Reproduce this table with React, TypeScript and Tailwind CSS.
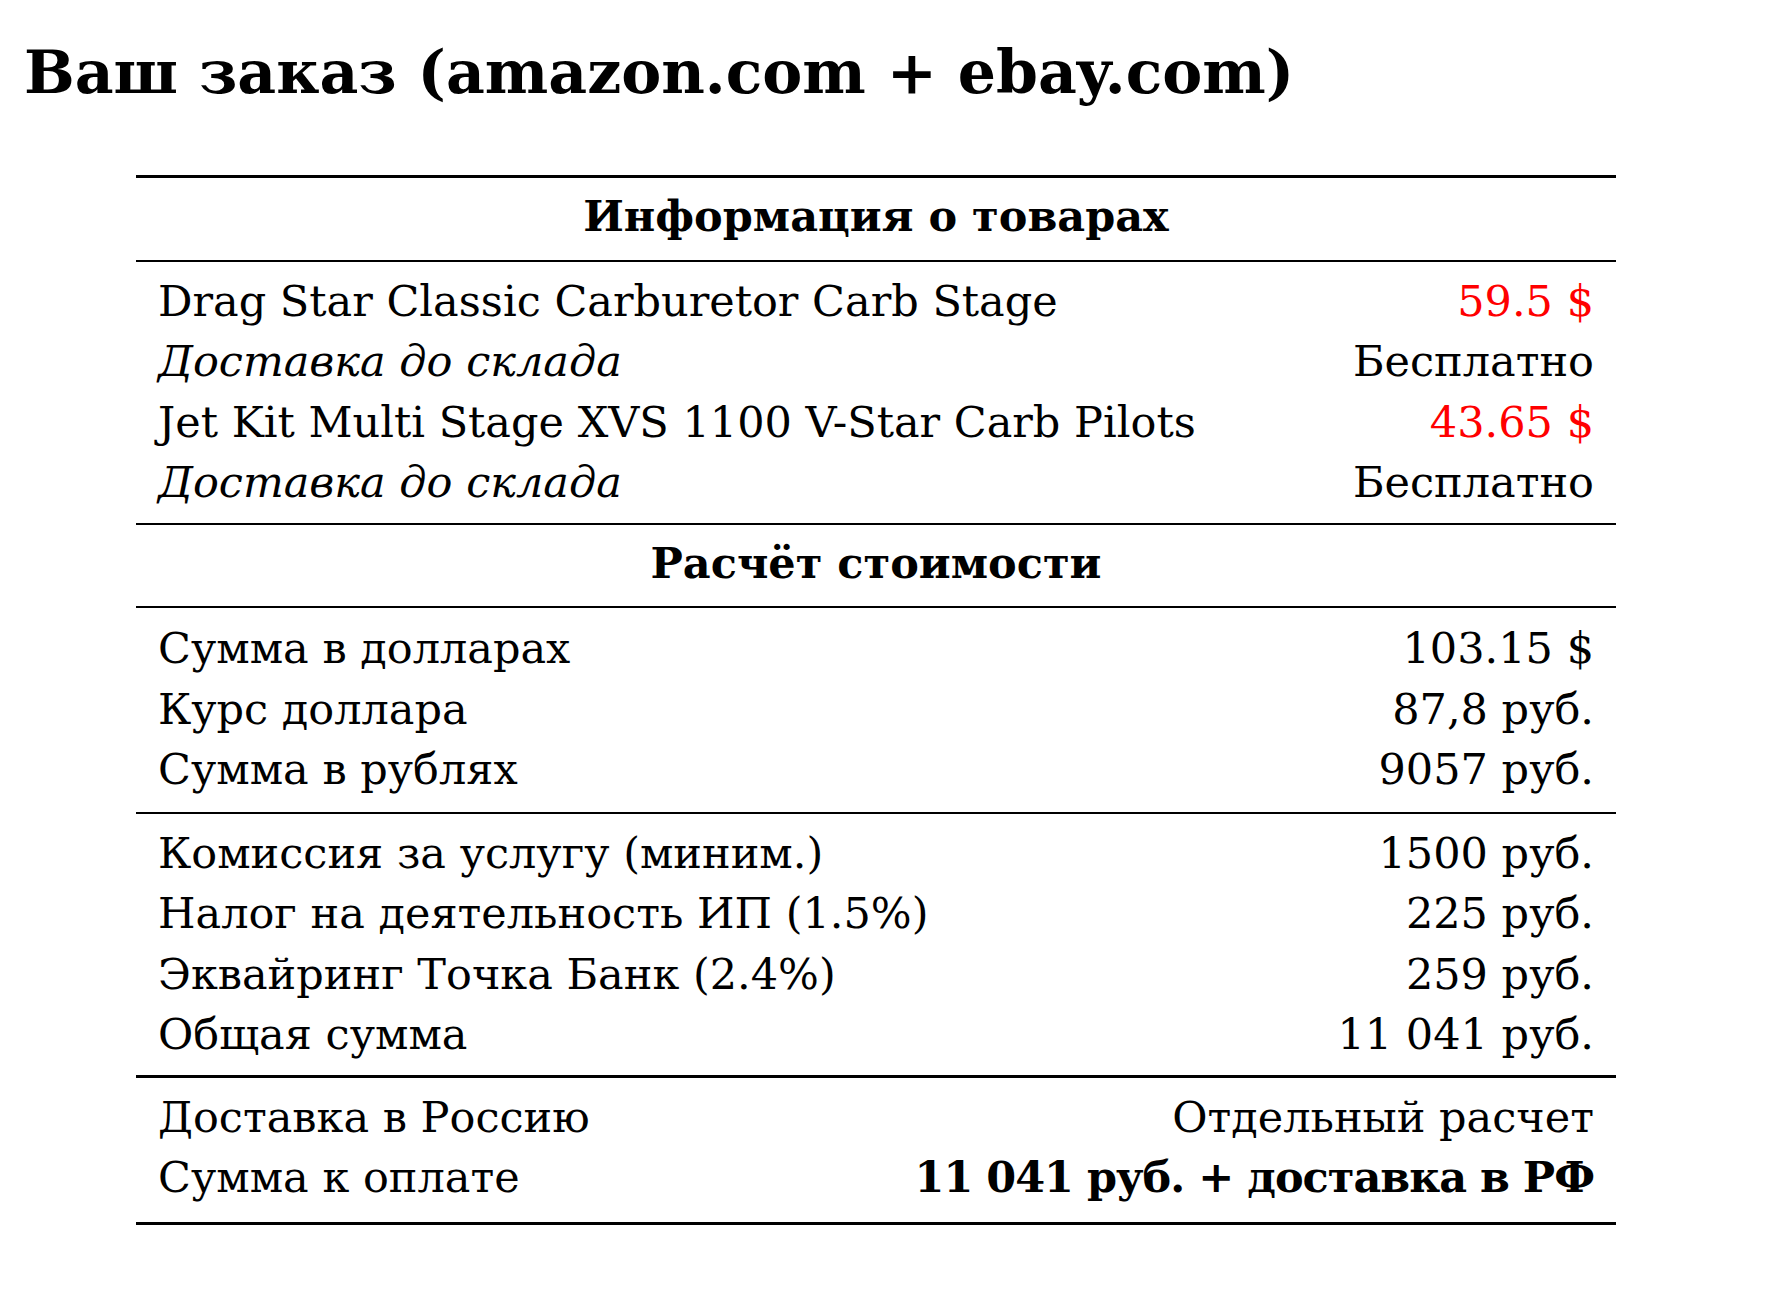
const serif = "font-['DejaVu_Serif','Liberation_Serif',serif]"

type Row = { label: string; value: string; italic?: boolean; red?: boolean; bold?: boolean }

const goods: Row[] = [
  { label: 'Drag Star Classic Carburetor Carb Stage', value: '59.5 $', red: true },
  { label: 'Доставка до склада', value: 'Бесплатно', italic: true },
  { label: 'Jet Kit Multi Stage XVS 1100 V-Star Carb Pilots', value: '43.65 $', red: true },
  { label: 'Доставка до склада', value: 'Бесплатно', italic: true },
]

const base: Row[] = [
  { label: 'Сумма в долларах', value: '103.15 $' },
  { label: 'Курс доллара', value: '87,8 руб.' },
  { label: 'Сумма в рублях', value: '9057 руб.' },
]

const fees: Row[] = [
  { label: 'Комиссия за услугу (миним.)', value: '1500 руб.' },
  { label: 'Налог на деятельность ИП (1.5%)', value: '225 руб.' },
  { label: 'Эквайринг Точка Банк (2.4%)', value: '259 руб.' },
  { label: 'Общая сумма', value: '11 041 руб.' },
]

const total: Row[] = [
  { label: 'Доставка в Россию', value: 'Отдельный расчет' },
  { label: 'Сумма к оплате', value: '11 041 руб. + доставка в РФ', bold: true },
]

function Rows({ rows, className = '' }: { rows: Row[]; className?: string }) {
  return (
    <div className={`px-[22px] ${className}`}>
      {rows.map((r, i) => (
        <div key={i} className="flex items-baseline justify-between">
          <span className={r.italic ? 'italic' : ''}>{r.label}</span>
          <span className={`${r.red ? 'text-[#ff0000]' : ''} ${r.bold ? 'font-bold tracking-[-1px]' : ''}`}>
            {r.value}
          </span>
        </div>
      ))}
    </div>
  )
}

function Heading({ children }: { children: React.ReactNode }) {
  return <div className="pt-[8px] pb-[13px] text-center font-bold">{children}</div>
}

export default function App() {
  return (
    <div className={`min-h-screen bg-white text-black ${serif}`}>
      <h1 className="pl-[24px] pt-[32px] text-[60px] leading-[80px] font-bold">
        Ваш заказ (amazon.com + ebay.com)
      </h1>

      <div className="ml-[136px] mt-[63px] w-[1480px] text-[43px] leading-[60.5px]">
        <div className="border-t-[3px] border-black" />
        <Heading>Информация о товарах</Heading>
        <div className="border-t-2 border-black" />
        <Rows rows={goods} className="pt-[9px] pb-[10px]" />
        <div className="border-t-2 border-black" />
        <Heading>Расчёт стоимости</Heading>
        <div className="border-t-2 border-black" />
        <Rows rows={base} className="pt-[10px] pb-[12px]" />
        <div className="border-t-2 border-black" />
        <Rows rows={fees} className="pt-[9px] pb-[10px]" />
        <div className="border-t-[3px] border-black" />
        <Rows rows={total} className="pt-[9px] pb-[14px]" />
        <div className="border-t-[3px] border-black" />
      </div>
    </div>
  )
}
